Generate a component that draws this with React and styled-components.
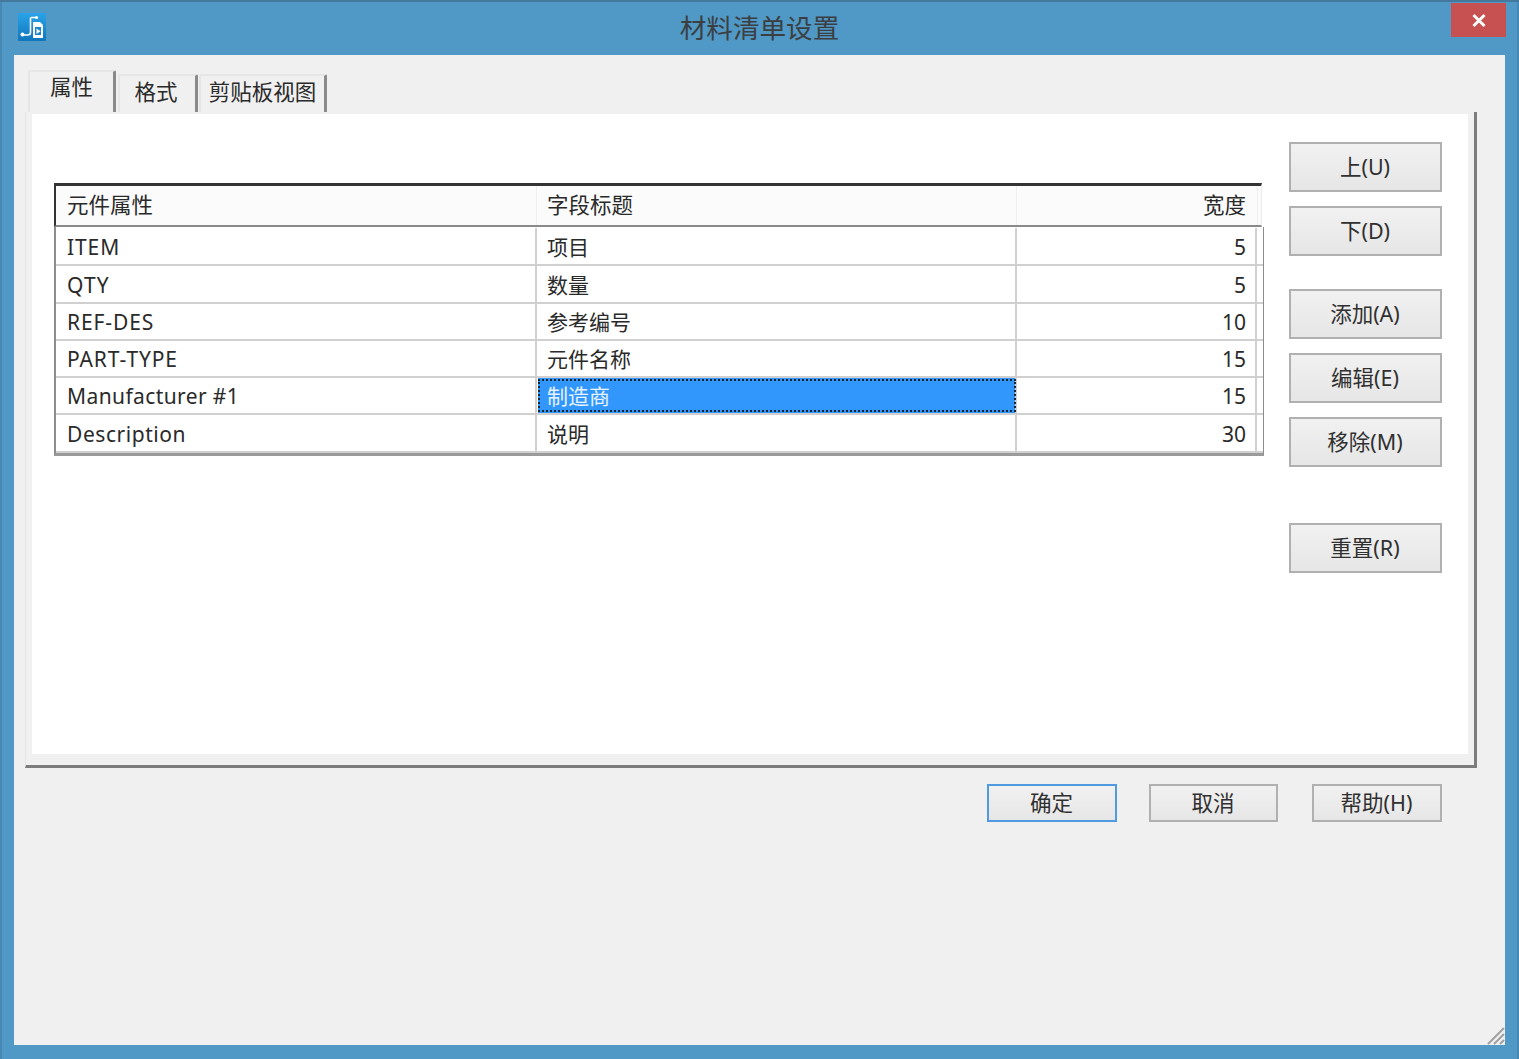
import React from 'react';
import styled, { createGlobalStyle } from 'styled-components';

const GlobalStyle = createGlobalStyle`
  html, body {
    margin: 0;
    padding: 0;
    background: #5096c4;
  }
  * {
    box-sizing: border-box;
  }
`;

const fontStack = `"Noto Sans", "Noto Sans CJK SC", sans-serif`;

const Window = styled.div`
  width: 1519px;
  height: 1059px;
  display: flex;
  flex-direction: column;
  background: #5098c5;
  border-top: 2px solid #44789c;
  box-shadow: inset 2px 0 0 #4687b3, inset -2px 0 0 #4687b3;
  font-family: ${fontStack};
  font-size: 21px;
  color: #2a2a2a;
  overflow: hidden;
`;

const TitleBar = styled.div`
  position: relative;
  height: 53px;
  flex-shrink: 0;
  display: flex;
  align-items: center;
  justify-content: center;
`;

const AppIcon = styled.svg`
  position: absolute;
  left: 18px;
  top: 11px;
`;

const Title = styled.div`
  font-size: 26.6px;
  color: #3b3f42;
  line-height: 53px;
`;

const CloseButton = styled.div`
  position: absolute;
  left: 1451px;
  top: 1px;
  width: 55px;
  height: 34px;
  background: #c75050;
  display: flex;
  align-items: center;
  justify-content: center;
`;

const Client = styled.div`
  margin: 0 14px 14px 14px;
  flex: 1;
  background: #f0f0f0;
  padding: 15px 0 0 11px;
  display: flex;
  flex-direction: column;
  position: relative;
`;

const TabRow = styled.div`
  display: flex;
  align-items: flex-end;
  height: 42px;
  padding-left: 3px;
`;

const Tab = styled.div`
  height: ${p => (p.$active ? 42 : 38)}px;
  width: ${p => p.$w}px;
  margin-right: ${p => p.$gap}px;
  padding-right: ${p => p.$nudge || 0}px;
  border-right: 3px solid #8a8a8a;
  border-top: 2px solid #e6e6e6;
  border-left: 2px solid #e6e6e6;
  background: #f0f0f0;
  display: flex;
  align-items: center;
  justify-content: center;
  font-size: 21.5px;
  line-height: 1;
  padding-bottom: ${p => (p.$active ? 10 : 4)}px;
  border-radius: 2px 2px 0 0;
`;

const Panel = styled.div`
  width: 1452px;
  height: 656px;
  background: #f0f0f0;
  border-right: 3px solid #7c7c7c;
  border-bottom: 3px solid #7c7c7c;
  border-left: 1px solid #e4e4e4;
  padding: 2px 6px 11px 6px;
`;

const PanelInner = styled.div`
  background: #fff;
  height: 100%;
  display: flex;
  padding: 28px 26px 0 22px;
`;

const TableArea = styled.div`
  width: 1210px;
  padding-top: 41px;
  flex-shrink: 0;
`;

const HeaderRow = styled.div`
  display: grid;
  grid-template-columns: 481px 480px 241px;
  width: 1208px;
  height: 44px;
  background: #fbfbfb;
  border-top: 3px solid #333;
  border-left: 2px solid #333;
  border-bottom: 2px solid #8a8a8a;
  border-right: 1px solid #ededed;
`;

const HeaderCell = styled.div`
  display: flex;
  align-items: center;
  padding: 0 11px 2px;
  font-size: 21.5px;
  line-height: 1;
  border-right: 1px solid #efefef;
  justify-content: ${p => (p.$right ? 'flex-end' : 'flex-start')};
  &:nth-child(2) {
    padding-left: 10px;
  }
`;

const Body = styled.div`
  width: 1210px;
  height: 229px;
  border-left: 2px solid #8d8d8d;
  border-right: 1px solid #8d8d8d;
  border-bottom: 3px solid #9a9a9a;
  padding-top: 1px;
`;

const Row = styled.div`
  display: grid;
  grid-template-columns: 481px 480px 240px;
  height: ${p => p.$h}px;
  border-bottom: 2px solid #d0d0d0;
`;

const Cell = styled.div`
  display: flex;
  align-items: center;
  padding: 2px 11px 0;
  font-size: 21px;
  line-height: 1;
  white-space: nowrap;
  border-right: 2px solid #d0d0d0;
  justify-content: ${p => (p.$right ? 'flex-end' : 'flex-start')};
  letter-spacing: ${p => p.$track || 0}px;
  ${p => p.$right && 'padding-right: 9px;'}
  &:nth-child(2) {
    padding-left: 10px;
  }
  ${p => p.$selected && `
    &:nth-child(2) {
      padding-left: 9px;
      border-left: 1px solid #fff;
    }
    background: #3297fd;
    background-clip: padding-box;
    color: #e8f3ff;
    outline: 2px dotted #1c2733;
    outline-offset: -3px;
  `}
`;

const SideButtons = styled.div`
  margin-left: 25px;
  width: 153px;
  display: flex;
  flex-direction: column;
`;

const Button = styled.div`
  display: flex;
  align-items: center;
  justify-content: center;
  width: ${p => p.$w || 153}px;
  height: ${p => p.$h || 50}px;
  margin-top: ${p => p.$top || 0}px;
  margin-left: ${p => p.$left || 0}px;
  padding-bottom: 1px;
  padding-right: 1px;
  border: 2px solid ${p => (p.$primary ? '#4f9ae0' : '#b0b0b0')};
  background: linear-gradient(#f1f1f1, #e6e6e6);
  font-size: 21.5px;
  line-height: 1;
  color: #303030;
`;

const Footer = styled.div`
  display: flex;
  justify-content: flex-end;
  width: 1417px;
  margin-top: 16px;
`;

const Grip = styled.svg`
  position: absolute;
  right: 0;
  bottom: 0;
`;

const rows = [
  { prop: 'ITEM', track: 0.9, title: '项目', width: 5, h: 38 },
  { prop: 'QTY', track: 1.2, title: '数量', width: 5, h: 38 },
  { prop: 'REF-DES', track: 0.9, title: '参考编号', width: 10, h: 37 },
  { prop: 'PART-TYPE', track: 0.9, title: '元件名称', width: 15, h: 37 },
  { prop: 'Manufacturer #1', track: 0.4, title: '制造商', width: 15, h: 37, selected: true },
  { prop: 'Description', track: 0.55, title: '说明', width: 30, h: 38 },
];

export default function App() {
  return (
    <>
      <GlobalStyle />
      <Window>
        <TitleBar>
          <AppIcon width="28" height="28" viewBox="0 0 28 28">
            <defs>
              <linearGradient id="ic" x1="0" y1="0" x2="0" y2="1">
                <stop offset="0" stopColor="#2aa3e8" />
                <stop offset="1" stopColor="#0f76bd" />
              </linearGradient>
            </defs>
            <rect width="28" height="28" rx="1" fill="url(#ic)" />
            <path d="M13 4.5h5M12.5 4.5v15c0 2-1.5 2.5-3 2.5H5" stroke="#fff" strokeWidth="1.6" fill="none" />
            <circle cx="18.5" cy="4.5" r="1.6" fill="#fff" />
            <circle cx="4.5" cy="21.5" r="2" fill="#fff" />
            <path d="M15 9h7l3 3v13H15z" fill="#fff" />
            <path d="M17 14h6v8h-6z" fill="#1c86cc" />
            <path d="M18.5 15.5l4 2.7-4 2.7z" fill="#fff" />
          </AppIcon>
          <Title>材料清单设置</Title>
          <CloseButton>
            <svg width="16" height="15" viewBox="0 0 16 15">
              <path d="M2.5 2l11 11M13.5 2l-11 11" stroke="#fff" strokeWidth="3" />
            </svg>
          </CloseButton>
        </TitleBar>
        <Client>
          <TabRow>
            <Tab $active $w={88} $gap={2}>属性</Tab>
            <Tab $w={80} $gap={1} $nudge={3}>格式</Tab>
            <Tab $w={128} $gap={0}>剪贴板视图</Tab>
          </TabRow>
          <Panel>
            <PanelInner>
              <TableArea>
                <HeaderRow>
                  <HeaderCell>元件属性</HeaderCell>
                  <HeaderCell>字段标题</HeaderCell>
                  <HeaderCell $right>宽度</HeaderCell>
                </HeaderRow>
                <Body>
                  {rows.map(r => (
                    <Row key={r.prop} $h={r.h}>
                      <Cell $track={r.track}>{r.prop}</Cell>
                      <Cell $selected={r.selected}>{r.title}</Cell>
                      <Cell $right>{r.width}</Cell>
                    </Row>
                  ))}
                </Body>
              </TableArea>
              <SideButtons>
                <Button>上(U)</Button>
                <Button $top={14}>下(D)</Button>
                <Button $top={33}>添加(A)</Button>
                <Button $top={14}>编辑(E)</Button>
                <Button $top={14}>移除(M)</Button>
                <Button $top={56}>重置(R)</Button>
              </SideButtons>
            </PanelInner>
          </Panel>
          <Footer>
            <Button $primary $w={130} $h={38}>确定</Button>
            <Button $left={32} $w={129} $h={38}>取消</Button>
            <Button $left={34} $w={130} $h={38}>帮助(H)</Button>
          </Footer>
          <Grip width="20" height="20" viewBox="0 0 20 20">
            <path d="M19 3L3 19M19 9L9 19M19 15l-4 4" stroke="#a0a0a0" strokeWidth="2" fill="none" />
          </Grip>
        </Client>
      </Window>
    </>
  );
}
